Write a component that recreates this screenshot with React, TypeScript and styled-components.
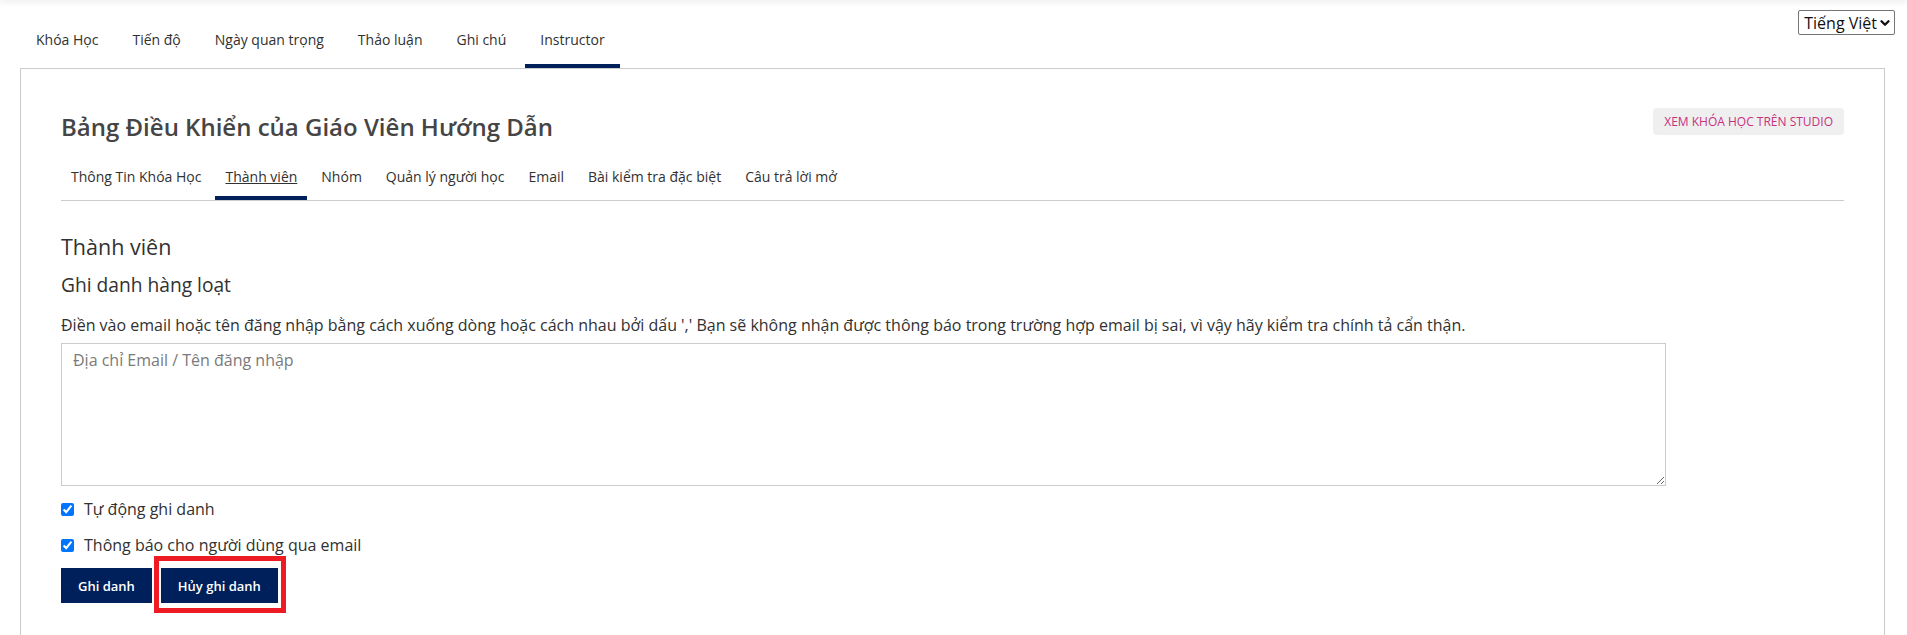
import React from "react";
import styled, { createGlobalStyle } from "styled-components";

const GlobalStyle = createGlobalStyle`
  html, body { margin: 0; padding: 0; background: #fff; }
  body { font-family: "Open Sans", "Noto Sans", sans-serif; color: #454545; }
  * { box-sizing: border-box; }
`;

const Page = styled.div`
  position: relative;
  min-height: 635px;
`;

const TopShadow = styled.div`
  height: 0;
  box-shadow: 0 0 6px 1px rgba(0, 0, 0, 0.18);
`;

const Header = styled.header`
  display: flex;
  justify-content: space-between;
  align-items: flex-start;
  padding: 10px 12px 0 21px;
`;

const MainNav = styled.nav`
  display: flex;
  gap: 4px;
`;

const MainTab = styled.a<{ $active?: boolean }>`
  display: block;
  padding: 20px 15px 14px;
  font-size: 14px;
  line-height: 20px;
  color: #313131;
  text-decoration: none;
  border-bottom: 4px solid ${(p) => (p.$active ? "#00205b" : "transparent")};
`;

const LangSelect = styled.div`
  display: flex;
  align-items: center;
  height: 25px;
  padding: 0 2px 0 5px;
  border: 1px solid #767676;
  border-radius: 2px;
  font-size: 16px;
  color: #111;
  gap: 1px;
`;

const Panel = styled.section`
  margin: 0 22px 0 20px;
  border: 1px solid #cbcbcb;
  border-bottom: none;
  padding: 40px 40px 40px;
`;

const TitleRow = styled.div`
  display: flex;
  justify-content: space-between;
  align-items: flex-start;
  margin-bottom: 10px;
`;

const Title = styled.h1`
  margin: 0;
  font-size: 24px;
  line-height: 36px;
  font-weight: 600;
  color: #454545;
`;

const StudioButton = styled.a`
  display: block;
  margin-top: -1px;
  padding: 0 11px;
  height: 27px;
  line-height: 27px;
  background: #efefef;
  border-radius: 4px;
  font-size: 12px;
  color: #c6317f;
  text-decoration: none;
  text-transform: uppercase;
`;

const SubNav = styled.nav`
  display: flex;
  gap: 4px;
  border-bottom: 1px solid #cbcbcb;
`;

const SubTab = styled.a<{ $active?: boolean }>`
  display: block;
  padding: 12px 10px 9px;
  font-size: 14px;
  line-height: 20px;
  color: #313131;
  text-decoration: ${(p) => (p.$active ? "underline" : "none")};
  border-bottom: 4px solid ${(p) => (p.$active ? "#00205b" : "transparent")};
`;

const SectionTitle = styled.h2`
  margin: 31px 0 0;
  font-size: 21.5px;
  line-height: 30px;
  font-weight: 400;
  color: #313131;
`;

const SubTitle = styled.h3`
  margin: 9px 0 0;
  font-size: 19.2px;
  line-height: 28px;
  font-weight: 400;
  color: #313131;
`;

const Description = styled.p`
  margin: 14px 0 0;
  font-size: 16px;
  line-height: 24px;
  color: #313131;
`;

const Identifiers = styled.textarea`
  display: block;
  width: 90%;
  height: 143px;
  margin-top: 6px;
  padding: 4px 11px;
  border: 1px solid #cbcbcb;
  font-family: "Open Sans", "Noto Sans", sans-serif;
  font-size: 16px;
  line-height: 24px;
  color: #313131;
  &::placeholder { color: #7a7a7a; }
`;

const CheckRow = styled.label`
  display: flex;
  align-items: center;
  gap: 10px;
  margin-top: 11px;
  font-size: 16px;
  line-height: 24px;
  color: #313131;
  & + & { margin-top: 12px; }
`;

const Check = styled.input`
  width: 13px;
  height: 13px;
  margin: 0;
`;

const Actions = styled.div`
  display: flex;
  gap: 9px;
  margin-top: 11px;
`;

const Highlight = styled.span<{ $on?: boolean }>`
  position: relative;
  display: inline-flex;
  &::after {
    content: "";
    display: ${(p) => (p.$on ? "block" : "none")};
    position: absolute;
    left: -7px;
    right: -8px;
    top: -12px;
    bottom: -10px;
    border: 5px solid #ed1c24;
    pointer-events: none;
  }
`;

const ActionButton = styled.button`
  height: 35px;
  padding: 0 17px;
  border: none;
  background: #00205b;
  color: #fff;
  font-family: "Open Sans", "Noto Sans", sans-serif;
  font-size: 13px;
  font-weight: 600;
`;

const Chevron = () => (
  <svg width="14" height="14" viewBox="0 0 24 24" fill="none" stroke="#111" strokeWidth="4" strokeLinecap="round" strokeLinejoin="round">
    <polyline points="6 9 12 15 18 9" />
  </svg>
);

export default function App() {
  const mainTabs = ["Khóa Học", "Tiến độ", "Ngày quan trọng", "Thảo luận", "Ghi chú", "Instructor"];
  const subTabs = ["Thông Tin Khóa Học", "Thành viên", "Nhóm", "Quản lý người học", "Email", "Bài kiểm tra đặc biệt", "Câu trả lời mở"];
  return (
    <Page>
      <GlobalStyle />
      <TopShadow />
      <Header>
        <MainNav>
          {mainTabs.map((t) => (
            <MainTab key={t} $active={t === "Instructor"}>{t}</MainTab>
          ))}
        </MainNav>
        <LangSelect>
          Tiếng Việt
          <Chevron />
        </LangSelect>
      </Header>
      <Panel>
        <TitleRow>
          <Title>Bảng Điều Khiển của Giáo Viên Hướng Dẫn</Title>
          <StudioButton>Xem khóa học trên Studio</StudioButton>
        </TitleRow>
        <SubNav>
          {subTabs.map((t) => (
            <SubTab key={t} $active={t === "Thành viên"}>{t}</SubTab>
          ))}
        </SubNav>
        <SectionTitle>Thành viên</SectionTitle>
        <SubTitle>Ghi danh hàng loạt</SubTitle>
        <Description>
          Điền vào email hoặc tên đăng nhập bằng cách xuống dòng hoặc cách nhau bởi dấu ',' Bạn sẽ không nhận được thông báo trong trường hợp email bị sai, vì vậy hãy kiểm tra chính tả cẩn thận.
        </Description>
        <Identifiers placeholder="Địa chỉ Email / Tên đăng nhập" />
        <CheckRow>
          <Check type="checkbox" defaultChecked />
          Tự động ghi danh
        </CheckRow>
        <CheckRow>
          <Check type="checkbox" defaultChecked />
          Thông báo cho người dùng qua email
        </CheckRow>
        <Actions>
          <ActionButton>Ghi danh</ActionButton>
          <Highlight $on>
            <ActionButton>Hủy ghi danh</ActionButton>
          </Highlight>
        </Actions>
      </Panel>
    </Page>
  );
}
